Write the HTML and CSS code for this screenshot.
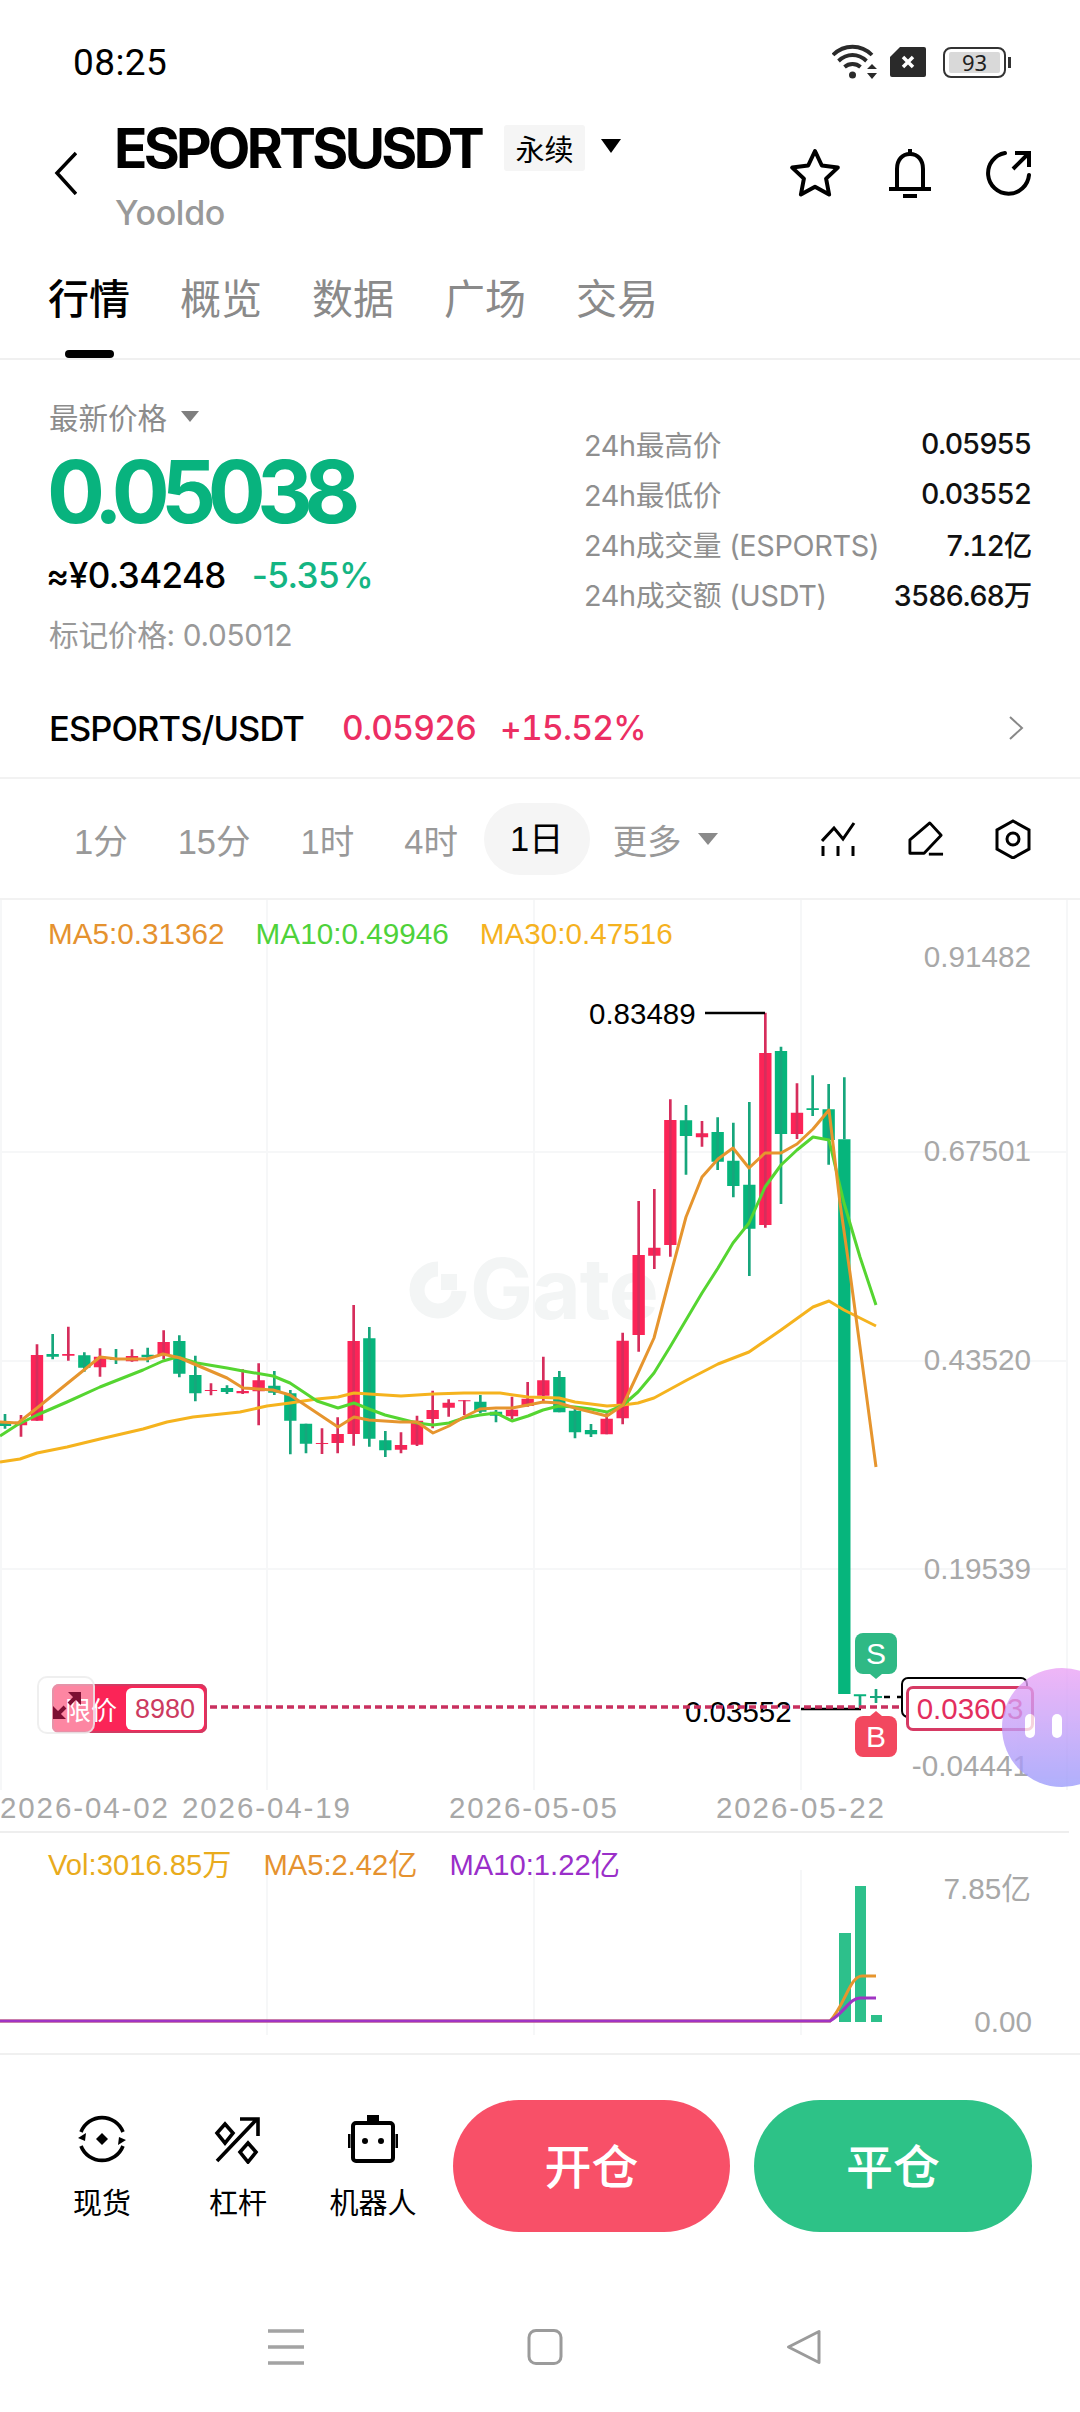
FILE: index.html
```html
<!DOCTYPE html>
<html lang="zh">
<head>
<meta charset="utf-8">
<title>ESPORTSUSDT</title>
<link rel="stylesheet" href="styles.css">
</head>
<body>
<div class="page">
  <div class="status">
    <span class="time">08:25</span>
    <div class="status-icons">
      <svg class="ic-wifi" viewBox="0 0 46 36"><g fill="none" stroke="#2a2a2a" stroke-width="3.800"><path d="M1 11C12 0 29 0 40 11"/><path d="M6.500 17C15 9 26 9 34.500 17"/><path d="M12.500 23C17 19 24 19 28.500 23"/></g><circle cx="20.500" cy="31" r="3.500" fill="#2a2a2a"/><path d="M40 20l5 5H35zM40 35l5-6H35z" fill="#2a2a2a"/></svg>
      <svg class="ic-sim" viewBox="0 0 36 30"><path d="M10 0H34a2 2 0 0 1 2 2V28a2 2 0 0 1-2 2H2a2 2 0 0 1-2-2V10z" fill="#2a2a2a"/><path d="M13 10l10 10M23 10L13 20" stroke="#fff" stroke-width="3.5"/></svg>
      <div class="battery"><span class="battery-in">93</span></div>
    </div>
  </div>

  <header class="head">
    <svg class="ic-back" viewBox="0 0 23 44"><path d="M22 2L3 22l19 21" fill="none" stroke="#000" stroke-width="3.5"/></svg>
    <div class="head-title">
      <div class="title-row">
        <h1 class="title">ESPORTSUSDT</h1>
        <span class="tag">永续</span>
        <span class="caret caret-black"></span>
      </div>
      <div class="sub">Yooldo</div>
    </div>
    <div class="head-icons">
      <svg class="ic-h" viewBox="0 0 50 50"><path d="M25 3l6.800 14.500 16 2.100-11.700 11 3 15.900L25 38.700 10.900 46.500l3-15.900L2.200 19.600l16-2.100z" fill="none" stroke="#000" stroke-width="4" stroke-linejoin="round"/></svg>
      <svg class="ic-h" viewBox="0 0 50 50"><path d="M12 41V21C12 12 17 6 25 6s13 6 13 15v20" fill="none" stroke="#000" stroke-width="4"/><path d="M4 41H46" stroke="#000" stroke-width="4"/><path d="M25 1V6" stroke="#000" stroke-width="4"/><path d="M18 48H32" stroke="#000" stroke-width="4"/></svg>
      <svg class="ic-h" viewBox="0 0 50 50"><path d="M21 5A20.500 20.500 0 1 0 45 27" fill="none" stroke="#000" stroke-width="4" stroke-linecap="round"/><path d="M29 21L44 6M31 5H45V19" fill="none" stroke="#000" stroke-width="4"/></svg>
    </div>
  </header>

  <nav class="tabs">
    <div class="tab tab-on"><span>行情</span><i class="tab-bar"></i></div>
    <div class="tab"><span>概览</span></div>
    <div class="tab"><span>数据</span></div>
    <div class="tab"><span>广场</span></div>
    <div class="tab"><span>交易</span></div>
  </nav>

  <section class="price">
    <div class="price-left">
      <div class="latest"><span>最新价格</span><span class="caret caret-grey"></span></div>
      <div class="big">0.05038</div>
      <div class="conv"><span>≈¥0.34248</span><span class="chg">-5.35%</span></div>
      <div class="mark">标记价格: 0.05012</div>
    </div>
    <div class="price-right">
      <div class="stat"><span>24h最高价</span><b>0.05955</b></div>
      <div class="stat"><span>24h最低价</span><b>0.03552</b></div>
      <div class="stat"><span>24h成交量 (ESPORTS)</span><b>7.12亿</b></div>
      <div class="stat"><span>24h成交额 (USDT)</span><b>3586.68万</b></div>
    </div>
  </section>

  <div class="pair">
    <span class="pair-name">ESPORTS/USDT</span>
    <span class="pair-val">0.05926</span>
    <span class="pair-val pair-pct">+15.52%</span>
    <svg class="ic-chev" viewBox="0 0 16 24"><path d="M2 1l12 11L2 23" fill="none" stroke="#888" stroke-width="2"/></svg>
  </div>

  <div class="frames">
    <span>1分</span><span>15分</span><span>1时</span><span>4时</span><span class="frame-on">1日</span>
    <span class="frame-more">更多<i class="caret caret-grey2"></i></span>
    <div class="frame-icons">
      <svg class="ic-f" viewBox="823 820 36 40"><path d="M824 842l12-13 9 11 11-16" fill="none" stroke="#000" stroke-width="3"/><path d="M825 847v10M840 847v10M855 847v10" stroke="#000" stroke-width="3"/></svg>
      <svg class="ic-f" viewBox="908 820 38 40"><path d="M931 823l-21 18v14h15l18-19z" fill="none" stroke="#000" stroke-width="3" stroke-linejoin="round"/><path d="M930 856h15" stroke="#000" stroke-width="3"/></svg>
      <svg class="ic-f" viewBox="996 820 36 40"><path d="M1014 822l16 9v19l-16 9-16-9V831z" fill="none" stroke="#000" stroke-width="3"/><circle cx="1014" cy="840" r="6" fill="none" stroke="#000" stroke-width="3"/></svg>
    </div>
  </div>

  <section class="chart">
    <div class="legend">
      <span class="c-o">MA5:0.31362</span><span class="c-g">MA10:0.49946</span><span class="c-y">MA30:0.47516</span>
    </div>
    <svg class="chart-svg" viewBox="0 900 1080 930">
      <g class="grid">
        <path d="M0 1152H1067M0 1361H1067M0 1569H1067"/>
        <path d="M1 900V1790M267 900V1790M534 900V1790M801 900V1790M1067 900V1790"/>
      </g>
      <g class="wm">
        <path d="M438 1269A21 21 0 1 0 459 1291" fill="none" stroke-width="15"/>
        <path d="M441 1274h16v16h-16z" stroke="none"/>
        <text x="470" y="1319">Gate</text>
      </g>
      <g class="candles" transform="translate(0 1270) scale(.33333)">
        <path class="bg" d="M15 458V468M158 252V260M253 256V293M348 264V270M443 254V262M538 213V311M586 315V370M681 354V366M823 347V368M871 370V452M918 461V521"/>
        <path class="wg" d="M15 432V476M158 192V268M253 247V305M348 237V282M443 233V277M538 196V322M586 257V394M681 346V372M823 303V375M871 360V553M918 461V550"/>
        <path class="br" d="M63 455V466M111 255V452M205 252V257M300 260V292M396 258V274M491 216V256M633 360V363M728 363V370M776 331V364M966 519V522M1013 492V519M1061 213V492"/>
        <path class="wr" d="M63 435V500M111 223V452M205 170V272M300 235V320M396 238V275M491 181V268M633 340V376M728 298V372M776 280V466M966 475V552M1013 442V550M1061 105V527"/>
      </g>
      <g class="candles" transform="translate(340 1270) scale(.33333)">
        <path class="bg" d="M88 205V506M136 511V541M421 395V425M468 425V437M658 321V427M705 422V487M753 480V493"/>
        <path class="wg" d="M88 171V530M136 483V561M421 375V430M468 420V457M658 303V427M705 415V505M753 462V501"/>
        <path class="br" d="M183 525V539M231 452V524M278 420V447M326 398V413M373 391V394M516 419V439M563 386V408M610 331V377M800 446V493M848 212V445"/>
        <path class="wr" d="M183 487V550M231 437V528M278 362V475M326 388V440M373 391V435M516 380V447M563 336V410M610 260V395M800 430V493M848 188V463"/>
      </g>
      <g class="candles" transform="translate(520 1060) scale(.33333)">
        <path class="bg" d="M498 181V228M593 216V305M640 302V378M688 374V506M783 -27V222M878 145V150M926 148V240M973 238V1902M1020 1903V1909"/>
        <path class="wg" d="M498 135V344M593 172V330M640 188V412M688 126V648M783 -40V432M878 46V168M926 72V314M973 52V238M1020 1905V1941M1068 1887V1929"/>
        <path class="br" d="M356 585V825M403 563V587M451 180V555M546 220V232M736 -21V495M831 158V222"/>
        <path class="wr" d="M356 423V875M403 387V627M451 118V590M546 183V260M736 -142V503M831 70V237"/>
        <path class="tick" d="M1050 1911H1086"/>
      </g>
      <polyline class="ma m30" points="0,1462 20,1459 37,1453 67,1447 100,1439 143,1429 167,1422 193,1417 240,1412 267,1406 290,1403 317,1399 338,1397 354,1393 369,1394 401,1396 433,1394 464,1393 500,1393 528,1397 559,1398 575,1402 607,1406 623,1405 638,1403 654,1398 687,1380 718,1364 749,1352 781,1330 813,1307 829,1301 844,1310 876,1326"/>
      <polyline class="ma m10" points="0,1436 17,1425 37,1415 67,1402 100,1387 143,1370 163,1361 177,1357 197,1363 227,1368 243,1371 273,1376 290,1383 317,1401 338,1408 354,1403 369,1409 385,1415 401,1419 417,1423 433,1425 449,1423 464,1418 480,1415 496,1413 512,1421 528,1416 543,1410 559,1406 575,1407 591,1409 607,1412 623,1405 638,1392 654,1373 670,1347 686,1320 702,1293 718,1268 733,1243 749,1223 765,1187 781,1165 797,1150 813,1137 829,1140 844,1203 860,1257 876,1305"/>
      <polyline class="ma m5" points="0,1422 18,1423 37,1408 100,1357 117,1359 147,1359 163,1354 180,1358 227,1378 243,1388 273,1390 290,1395 338,1427 354,1417 369,1420 400,1422 417,1422 433,1433 449,1426 464,1417 480,1409 496,1408 512,1408 528,1405 543,1402 559,1403 575,1408 591,1412 607,1416 623,1405 638,1373 654,1338 670,1277 686,1217 702,1177 718,1159 733,1148 749,1168 765,1153 781,1153 797,1144 813,1129 829,1110 840,1203 850,1273 860,1347 876,1467"/>
      <g class="axis">
        <text x="1031" y="967">0.91482</text>
        <text x="1031" y="1161">0.67501</text>
        <text x="1031" y="1370">0.43520</text>
        <text x="1031" y="1579">0.19539</text>
        <text x="1029" y="1776">-0.04441</text>
      </g>
      <g class="dates">
        <text x="0" y="1818">2026-04-02</text>
        <text x="182" y="1818">2026-04-19</text>
        <text x="449" y="1818">2026-05-05</text>
        <text x="716" y="1818">2026-05-22</text>
      </g>
      <text class="hl" x="589" y="1024">0.83489</text>
      <path class="hl-line" d="M705 1013H765"/>
      <text class="hl" x="685" y="1722">0.03552</text>
      <path class="hl-line" d="M801 1709H861M884 1697h6M897 1697h4"/>
      <path class="dash" d="M210 1707H906"/>
    </svg>

    <div class="limit"><span class="limit-l">限价</span><span class="limit-v">8980</span></div>
    <div class="expand"><svg class="ic-exp" viewBox="0 0 28 30"><path d="M15 2H28V15zM0 16l13 13H0z" fill="#7d0f33"/><path d="M22 8l-6 6M6 23l6-6" stroke="#7d0f33" stroke-width="4"/></svg></div>
    <div class="last-black"></div>
    <div class="last">0.03603</div>
    <div class="flag flag-s">S</div>
    <div class="flag flag-b">B</div>
    <div class="ball"><i></i><i></i></div>
  </section>

  <section class="vol">
    <div class="legend legend-v">
      <span class="c-y2">Vol:3016.85万</span><span class="c-o">MA5:2.42亿</span><span class="c-p">MA10:1.22亿</span>
    </div>
    <svg class="vol-svg" viewBox="0 1831 1080 222">
      <g class="grid"><path d="M267 1870V2035M534 1870V2035M801 1870V2035"/></g>
      <path class="vbar" d="M839 1933h12v89h-12zM855 1886h11v136h-11zM871 2015h11v7h-11z"/>
      <path class="vl vl-o" d="M0 2021H830C845 2005 850 1976 862 1976H876"/>
      <path class="vl vl-p" d="M0 2021H830C845 2012 850 1998 860 1998H876"/>
      <g class="axis">
        <text x="1031" y="1899">7.85亿</text>
        <text x="1032" y="2032">0.00</text>
      </g>
    </svg>
  </section>

  <section class="actions">
    <div class="tool">
      <svg class="ic-t" viewBox="0 0 50 50"><path d="M4 18A22.500 22.500 0 0 1 46 18M46 32A22.500 22.500 0 0 1 4 32" fill="none" stroke="#000" stroke-width="3.600"/><path d="M1 24l7 3 1-8zM49 26l-7-3-1 8z" fill="#000"/><path d="M25 19l6 6-6 6-6-6z" fill="#000"/></svg>
      <span>现货</span>
    </div>
    <div class="tool">
      <svg class="ic-t" viewBox="0 0 50 50"><path d="M4 47L44 5M27 5H45V22" fill="none" stroke="#000" stroke-width="3.600"/><path d="M12 10l8 9-8 10-8-10zM35 29l8 9-8 10-8-10z" fill="none" stroke="#000" stroke-width="3.600"/></svg>
      <span>杠杆</span>
    </div>
    <div class="tool">
      <svg class="ic-t" viewBox="0 0 50 50"><path d="M19 1h12v6H19z" fill="#000"/><rect x="5" y="9" width="40" height="38" rx="3" fill="none" stroke="#000" stroke-width="4"/><path d="M1 20v14M49 20v14" stroke="#000" stroke-width="3"/><circle cx="17" cy="27" r="3" fill="#000"/><circle cx="33" cy="27" r="3" fill="#000"/></svg>
      <span>机器人</span>
    </div>
    <button class="btn btn-open">开仓</button>
    <button class="btn btn-close">平仓</button>
  </section>

  <footer class="navbar">
    <svg class="ic-n" viewBox="0 0 36 36"><path d="M0 2H36M0 18H36M0 34H36" stroke="#a3a3a3" stroke-width="3.500"/></svg>
    <svg class="ic-n" viewBox="0 0 36 36"><rect x="2" y="1.500" width="32" height="33" rx="7" fill="none" stroke="#9b9b9b" stroke-width="3"/></svg>
    <svg class="ic-n" viewBox="0 0 36 36"><path d="M33 2.500V33.500L2.500 18z" fill="none" stroke="#9b9b9b" stroke-width="3" stroke-linejoin="round"/></svg>
  </footer>
</div>
</body>
</html>
```

FILE: styles.css
```css
* { box-sizing: border-box; }
html, body { margin: 0; padding: 0; background: #fff; }
body { font-family: Inter, "Noto Sans CJK SC", sans-serif; color: #000; }
.page { width: 1080px; height: 2412px; overflow: hidden; display: flex; flex-direction: column; background: #fff; }

.caret { display: inline-block; width: 0; height: 0; border-style: solid; border-color: transparent; border-bottom-width: 0; }
.caret-black { border-width: 14px 10px 0; border-top-color: #000; margin-left: 16px; margin-top: -4px; }
.caret-grey { border-width: 11px 9px 0; border-top-color: #7f7f7f; margin-left: 14px; }
.caret-grey2 { border-width: 12px 10px 0; border-top-color: #8a8a8a; margin-left: 16px; }

.status { height: 124px; display: flex; align-items: center; justify-content: space-between; padding: 0 74px 0 73px; flex: none; }
.time { font-family: Roboto, sans-serif; font-size: 37px; letter-spacing: .4px; }
.status-icons { display: flex; align-items: center; }
.ic-wifi { width: 46px; height: 36px; }
.ic-sim { width: 36px; height: 30px; margin-left: 12px; }
.battery { width: 63px; height: 31px; margin-left: 17px; border: 2.500px solid #333; border-radius: 8px; padding: 3px 4px; position: relative; }
.battery::after { content: ""; position: absolute; right: -7px; top: 8px; width: 3px; height: 11px; background: #333; }
.battery-in { display: block; height: 100%; background: #d9d9d9; border-radius: 2px; font-family: "Noto Sans", sans-serif; font-size: 22px; line-height: 21px; text-align: center; color: #222; }

.head { height: 136px; flex: none; display: flex; padding-left: 54px; position: relative; }
.ic-back { width: 23px; height: 44px; margin-top: 27px; flex: none; }
.head-title { margin-left: 38px; }
.title-row { display: flex; align-items: center; height: 48px; }
.title { margin: 0 0 0 -1px; font-size: 55px; line-height: 48px; font-weight: 700; letter-spacing: -3.650px; width: 390px; white-space: nowrap; }
.tag { width: 81px; height: 46px; background: #f5f5f5; font-size: 29px; line-height: 46px; text-align: center; font-family: "Noto Sans CJK SC", sans-serif; border-radius: 3px; }
.sub { margin-top: 20px; font-size: 34px; line-height: 42px; font-weight: 500; color: #999; letter-spacing: -.3px; }
.head-icons { margin-left: auto; padding-right: 46px; display: flex; gap: 45px; margin-top: 24px; height: 50px; }
.ic-h { width: 50px; height: 50px; }
.ic-h:nth-child(2) { margin-right: 4px; }

.tabs { height: 100px; flex: none; display: flex; gap: 50px; padding-left: 48px; border-bottom: 2px solid #f0f0f0; }
.tab { width: 82px; display: flex; flex-direction: column; align-items: center; font-family: "Noto Sans CJK SC", sans-serif; font-size: 41px; line-height: 72px; color: #8a8a8a; font-weight: 400; }
.tab-on { color: #000; font-weight: 500; }
.tab-bar { display: block; width: 49px; height: 8px; border-radius: 4px; background: #000; margin-top: 18px; }

.price { height: 319px; flex: none; display: flex; padding: 36px 49px 0 49px; justify-content: space-between; }
.latest { font-size: 29.500px; line-height: 40px; color: #8c8c8c; display: flex; align-items: center; font-family: "Noto Sans CJK SC", sans-serif; }
.big { margin: 11px 0 0 -2px; font-size: 86px; line-height: 90px; font-weight: 700; color: #08b37e; letter-spacing: -8.500px; }
.conv { margin: 18px 0 0 -3px; font-size: 35px; line-height: 40px; font-weight: 500; display: flex; gap: 26px; letter-spacing: -.6px; white-space: nowrap; }
.chg { color: #14b583; }
.mark { margin-top: 20px; font-size: 29.700px; line-height: 40px; color: #999; letter-spacing: -.3px; }
.price-right { width: 447px; padding-top: 22px; }
.stat { height: 50px; display: flex; justify-content: space-between; align-items: center; font-size: 28.800px; color: #8f8f8f; white-space: nowrap; letter-spacing: -.3px; }
.stat b { font-weight: 500; font-size: 28.500px; color: #111; letter-spacing: -1.200px; font-variant-numeric: tabular-nums; }

.pair { height: 100px; flex: none; display: flex; align-items: center; padding: 0 56px 0 49px; border-bottom: 2px solid #f2f2f2; font-size: 33.500px; font-weight: 500; letter-spacing: -.7px; font-variant-numeric: tabular-nums; }
.pair-name { width: 293px; font-size: 34.500px; letter-spacing: -.9px; }
.pair-val { color: #ec2e63; width: 158px; }
.ic-chev { width: 16px; height: 24px; margin-left: auto; }

.frames { height: 121px; flex: none; display: flex; align-items: center; gap: 50px; padding: 0 49px 0 74px; border-bottom: 2px solid #f2f2f2; font-family: "Liberation Sans", "Noto Sans CJK SC", sans-serif; font-size: 34.500px; color: #999; white-space: nowrap; }
.frame-on { background: #f5f5f5; color: #000; height: 72px; line-height: 72px; padding: 0 26px; border-radius: 36px; margin: 0 -27px 0 -24px; }
.frame-more { display: flex; align-items: center; }
.frame-icons { margin-left: auto; display: flex; gap: 52px; }
.ic-f { width: 36px; height: 40px; margin-left: -1px; }

.chart { height: 931px; flex: none; position: relative; }
.chart-svg { position: absolute; left: 0; top: 0; width: 1080px; height: 930px; }
.legend { position: absolute; left: 48px; top: 16px; z-index: 1; display: flex; gap: 31px; font-family: "Liberation Sans", "Noto Sans CJK SC", sans-serif; font-size: 29.700px; line-height: 36px; white-space: nowrap; }
.c-o { color: #e5922f; }
.c-g { color: #4ed23a; }
.c-y { color: #f5b21f; }
.c-y2 { color: #e9ab1c; }
.c-p { color: #9a2fc9; }
.grid path { stroke: #f6f7f8; stroke-width: 2; fill: none; }
.wm { fill: #f3f5f5; stroke: #f3f5f5; }
.wm text { font-family: Inter, sans-serif; font-weight: 700; font-size: 84px; stroke: none; letter-spacing: -1px; }
.candles path { fill: none; }
.bg { stroke: #06b57c; stroke-width: 37; }
.br { stroke: #fb2457; stroke-width: 37; }
.wg { stroke: #17a67c; stroke-width: 8; }
.wr { stroke: #d62d5c; stroke-width: 8; }
.tick { stroke: #17a67c; stroke-width: 6; }
.ma { fill: none; stroke-width: 3; stroke-linejoin: round; }
.m5 { stroke: #e6952e; }
.m10 { stroke: #55d531; }
.m30 { stroke: #f5b31e; }
.axis text { font-family: "Liberation Sans", "Noto Sans CJK SC", sans-serif; font-size: 29.700px; fill: #a8a8a8; text-anchor: end; }
.dates text { font-family: "Liberation Sans", sans-serif; font-size: 29.500px; fill: #a8a8a8; letter-spacing: 1.900px; }
.hl { font-family: "Liberation Sans", sans-serif; font-size: 29.500px; fill: #000; }
.hl-line { stroke: #000; stroke-width: 2.500; fill: none; }
.dash { stroke: #c9305f; stroke-width: 3.500; stroke-dasharray: 7 4; fill: none; }

.limit { position: absolute; left: 52px; top: 784px; width: 155px; height: 49px; border-radius: 7px; background: #fb2457; box-shadow: inset 0 0 0 2px #d13a62; display: flex; align-items: center; padding: 0 3px 0 13px; }
.limit-l { width: 61px; font-family: "Noto Sans CJK SC", sans-serif; font-size: 26px; color: #fff; line-height: 49px; white-space: nowrap; }
.limit-v { flex: 1; height: 42px; background: #fff; border-radius: 6px; color: #cc3a60; font-family: "Liberation Sans", sans-serif; font-size: 27px; line-height: 42px; text-align: center; }
.expand { position: absolute; left: 37px; top: 776px; width: 58px; height: 58px; border-radius: 10px; background: rgba(255, 255, 255, .45); border: 2px solid rgba(235, 235, 235, .8); display: flex; align-items: center; justify-content: center; }
.ic-exp { width: 28px; height: 30px; margin-left: 2px; }
.last-black { position: absolute; left: 901px; top: 777px; width: 127px; height: 41px; border: 2.500px solid #000; border-radius: 7px; background: #fff; }
.last { position: absolute; left: 906px; top: 786px; width: 128px; height: 45px; border: 3px solid #d63a64; border-radius: 7px; background: #fff; color: #e32e5e; font-family: "Liberation Sans", sans-serif; font-size: 29.500px; line-height: 39px; text-align: center; }
.flag { position: absolute; left: 855px; width: 42px; height: 41px; border-radius: 8px; color: #fff; font-family: "Liberation Sans", sans-serif; font-size: 30px; line-height: 41px; text-align: center; }
.flag::after { content: ""; position: absolute; left: 15px; border-style: solid; border-color: transparent; }
.flag-s { top: 733px; background: #2fb985; }
.flag-s::after { top: 41px; border-width: 5px 6px 0; border-top-color: #2fb985; }
.flag-b { top: 816px; background: #f2485f; }
.flag-b::after { top: -5px; border-width: 0 6px 5px; border-bottom-color: #f2485f; }
.ball { position: absolute; left: 1002px; top: 768px; width: 120px; height: 119px; border-radius: 50%; background: linear-gradient(180deg, #eba2f6 0%, #9a9afb 100%); opacity: .78; display: flex; gap: 17px; padding: 46px 0 0 23px; }
.ball i { display: block; width: 10px; height: 24px; border-radius: 5px; background: #fff; }

.vol { height: 222px; flex: none; position: relative; background: linear-gradient(#eeeeee, #eeeeee) 0 0 / 1069px 2px no-repeat, #fff; }
.vol-svg { position: absolute; left: 0; top: 0; width: 1080px; height: 222px; }
.legend-v { top: 16px; gap: 32px; font-size: 29.200px; }
.vbar { fill: #2dc08b; }
.vl { fill: none; stroke-width: 3; }
.vl-o { stroke: #e6952e; }
.vl-p { stroke: #a034c4; }

.actions { height: 237px; flex: none; display: flex; border-top: 2px solid #f0f0f0; padding: 45px 48px 0 0; align-items: flex-start; }
.tool { width: 50px; display: flex; flex-direction: column; align-items: center; font-family: "Noto Sans CJK SC", sans-serif; font-size: 29px; line-height: 40px; white-space: nowrap; }
.tool:nth-child(1) { margin-left: 77px; }
.tool:nth-child(2) { margin-left: 86px; }
.tool:nth-child(3) { margin-left: 85px; }
.ic-t { width: 50px; height: 50px; margin: 14px 0 17px; flex: none; }
.btn { border: 0; width: 277px; height: 132px; border-radius: 66px; color: #fff; font-family: "Noto Sans CJK SC", sans-serif; font-size: 47px; font-weight: 500; padding: 0 0 6px; }
.btn-open { background: #f85068; margin-left: 55px; }
.btn-close { background: #2dc287; margin-left: 24px; width: 278px; }

.navbar { flex: 1; display: flex; gap: 223px; padding: 39px 0 0 268px; align-items: flex-start; }
.ic-n { width: 36px; height: 36px; flex: none; }
```
